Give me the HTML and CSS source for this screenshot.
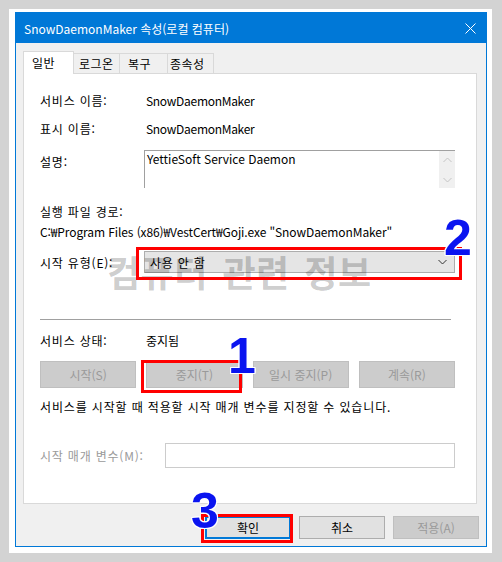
FILE: index.html
```html
<!DOCTYPE html>
<html lang="ko">
<head>
  <meta charset="UTF-8" />
  <meta name="viewport" content="width=device-width, initial-scale=1.0"/>
  <title>SnowDaemonMaker 속성</title>
  <link rel="stylesheet" href="styles.css">
</head>
<body>

  <div class="frame">
    <div class="window">

      <!-- Title bar -->
      <div class="titlebar">
        <span class="title">SnowDaemonMaker 속성(로컬 컴퓨터)</span>
        <svg class="close" width="11" height="11" viewBox="0 0 11 11">
          <path d="M0.5 0.5 L10.5 10.5 M10.5 0.5 L0.5 10.5" stroke="#fff" stroke-width="1" fill="none"/>
        </svg>
      </div>

      <div class="client">
        <!-- Tabs -->
        <div class="tabs">
          <div class="tab tab-general active">일반</div>
          <div class="tab tab-logon">로그온</div>
          <div class="tab tab-recovery">복구</div>
          <div class="tab tab-deps">종속성</div>
        </div>

        <!-- General tab -->
        <div class="panel">
          <div class="row">
            <span class="label">서비스 이름:</span>
            <span class="value latin">SnowDaemonMaker</span>
          </div>
          <div class="row">
            <span class="label">표시 이름:</span>
            <span class="value latin">SnowDaemonMaker</span>
          </div>

          <div class="row desc-row">
            <span class="label desc-label">설명:</span>
            <div class="desc-box">
              <span class="desc-text">YettieSoft Service Daemon</span>
              <div class="scroll">
                <svg width="9" height="6" viewBox="0 0 9 6"><path d="M0.5 5 L4.5 1 L8.5 5" stroke="#c4c4c4" fill="none"/></svg>
                <svg width="9" height="6" viewBox="0 0 9 6"><path d="M0.5 1 L4.5 5 L8.5 1" stroke="#c4c4c4" fill="none"/></svg>
              </div>
            </div>
          </div>

          <div class="line exe-label">실행 파일 경로:</div>
          <div class="line path">C:₩Program Files (x86)₩VestCert₩Goji.exe "SnowDaemonMaker"</div>

          <div class="row start-row">
            <span class="label">시작 유형(E):</span>
            <div class="combo">
              <span class="combo-text">사용 안 함</span>
              <svg width="9" height="6" viewBox="0 0 9 6"><path d="M0.5 1 L4.5 5 L8.5 1" stroke="#333" fill="none"/></svg>
            </div>
          </div>

          <div class="separator"></div>

          <div class="line status-row">
            <span class="label">서비스 상태:</span>
            <span class="value">중지됨</span>
          </div>

          <div class="service-buttons">
            <button class="btn" disabled>시작(S)</button>
            <button class="btn" disabled>중지(T)</button>
            <button class="btn" disabled>일시 중지(P)</button>
            <button class="btn" disabled>계속(R)</button>
          </div>

          <div class="line help-text">서비스를 시작할 때 적용할 시작 매개 변수를 지정할 수 있습니다.</div>

          <div class="row param-row">
            <span class="label param-label">시작 매개 변수(M):</span>
            <div class="param-input"></div>
          </div>
        </div>

        <!-- Dialog buttons -->
        <div class="dialog-buttons">
          <button class="btn btn-default">확인</button>
          <button class="btn btn-normal">취소</button>
          <button class="btn" disabled>적용(A)</button>
        </div>
      </div>

      <!-- Annotations drawn over the dialog -->
      <div class="watermark">컴퓨터 관련 정보</div>
      <div class="mark mark-2"></div>
      <div class="mark mark-1"></div>
      <div class="mark mark-3"></div>
      <div class="num num-2">2</div>
      <div class="num num-1">1</div>
      <div class="num num-3">3</div>
    </div>
  </div>

</body>
</html>
```

FILE: styles.css
```css
* {
  box-sizing: border-box;
}

body {
  margin: 0;
  padding: 9px;
  background: #d3d3d3;
  font-family: "Noto Sans CJK KR", "Noto Sans", sans-serif;
  font-size: 12px;
  color: #000;
}

.frame {
  width: 483px;
  height: 544px;
  background: #fff;
  padding: 3px 0 0 6px;
}

.window {
  position: relative;
  width: 472px;
  height: 535px;
  border: 1px solid #0078d7;
  background: #f0f0f0;
}

.titlebar {
  height: 30px;
  background: #0078d7;
  display: flex;
  align-items: center;
  padding: 0 10px 0 8px;
  color: #fff;
}

.close {
  margin-left: auto;
}

.client {
  padding: 8px 7px 0 7px;
}

/* Tabs */
.tabs {
  display: flex;
  align-items: flex-end;
  height: 22px;
}

.tab {
  height: 20px;
  line-height: 19px;
  border: 1px solid #d9d9d9;
  border-bottom: none;
  border-left: none;
  background: #f0f0f0;
  letter-spacing: 0.4px;
}

.tab.active {
  height: 23px;
  line-height: 21px;
  margin-bottom: -1px;
  border-left: 1px solid #d9d9d9;
  background: #fff;
  position: relative;
  z-index: 1;
}

.tab-general  { width: 51px; padding-left: 8px; }
.tab-logon    { width: 46px; padding-left: 5px; }
.tab-recovery { width: 48px; padding-left: 8px; }
.tab-deps     { width: 46px; padding-left: 2px; }

.panel {
  width: 454px;
  height: 431px;
  background: #fff;
  border: 1px solid #d9d9d9;
  padding: 12px 21px 0 16px;
}

.row {
  display: flex;
  align-items: center;
  height: 28px;
}

.label {
  width: 104px;
  flex-shrink: 0;
  letter-spacing: 0.8px;
}

.value {
  padding-left: 2px;
}

.latin {
  letter-spacing: -0.3px;
}

.line {
  line-height: 20px;
  height: 20px;
  display: flex;
}

.path {
  letter-spacing: -0.1px;
}

/* Description */
.desc-row {
  margin-top: 8px;
  height: 38px;
  align-items: flex-start;
}

.desc-label {
  margin-top: 3px;
}

.desc-box {
  flex: 1;
  height: 38px;
  border-top: 1px solid #a0a0a0;
  border-left: 1px solid #a0a0a0;
  display: flex;
  padding-left: 2px;
}

.desc-text {
  flex: 1;
  line-height: 16px;
}

.scroll {
  width: 16px;
  background: #f0f0f0;
  display: flex;
  flex-direction: column;
  align-items: center;
  justify-content: space-between;
  padding: 6px 0 5px;
}

.exe-label {
  margin-top: 14px;
  letter-spacing: 0.8px;
}

/* Start type */
.start-row {
  margin-top: 9px;
  height: 22px;
}

.combo {
  flex: 1;
  height: 22px;
  border: 1px solid #adadad;
  background: #e5e5e5;
  display: flex;
  align-items: center;
  justify-content: space-between;
  padding: 0 7px 0 5px;
}

.combo-text {
  letter-spacing: 0.8px;
}

.separator {
  margin-top: 46px;
  margin-right: 4px;
  height: 1px;
  background: #a0a0a0;
}

.status-row {
  margin-top: 11px;
}

/* Buttons */
.btn {
  font-family: inherit;
  font-size: 12px;
  padding: 0;
  border: 1px solid #adadad;
  background: #e1e1e1;
  color: #000;
}

.btn:disabled {
  border-color: #bfbfbf;
  background: #cccccc;
  color: #9a9a9a;
}

.service-buttons {
  margin-top: 10px;
  display: grid;
  grid-template-columns: repeat(4, 1fr);
  column-gap: 10px;
  height: 27px;
}

.help-text {
  margin-top: 9px;
  letter-spacing: 0.85px;
}

.param-row {
  margin-top: 26px;
  height: 25px;
}

.param-label {
  width: 125px;
  color: #9a9a9a;
}

.param-input {
  flex: 1;
  height: 25px;
  border: 1px solid #cccccc;
  background: #fff;
}

.dialog-buttons {
  margin-top: 12px;
  display: flex;
  justify-content: flex-end;
  gap: 8px;
  height: 23px;
}

.dialog-buttons .btn {
  width: 86px;
}

.btn-default {
  border: 2px solid #0078d7;
}

/* Annotations */
.watermark {
  position: absolute;
  left: 91px;
  top: 240px;
  font-size: 36px;
  font-weight: bold;
  line-height: 1;
  letter-spacing: 0.5px;
  word-spacing: 4px;
  color: rgba(0, 0, 0, 0.21);
  white-space: nowrap;
}

.mark {
  position: absolute;
  border: 3px solid #ff0000;
}

.mark-2 { left: 120px; top: 234px; width: 326px; height: 33px; }
.mark-1 { left: 125px; top: 347px; width: 101px; height: 33px; }
.mark-3 { left: 185px; top: 501px; width: 92px; height: 29px; }

.num {
  position: absolute;
  font-family: "Liberation Sans", Arial, sans-serif;
  font-size: 50px;
  font-weight: bold;
  line-height: 1;
  color: #0a14f0;
  text-shadow: 1px 0 #fff, -1px 0 #fff, 0 1px #fff, 0 -1px #fff,
               1px 1px #fff, -1px -1px #fff, 1px -1px #fff, -1px 1px #fff;
}

.num-2 { left: 428px; top: 200px; }
.num-1 { left: 212px; top: 318px; }
.num-3 { left: 175px; top: 473px; }
```
